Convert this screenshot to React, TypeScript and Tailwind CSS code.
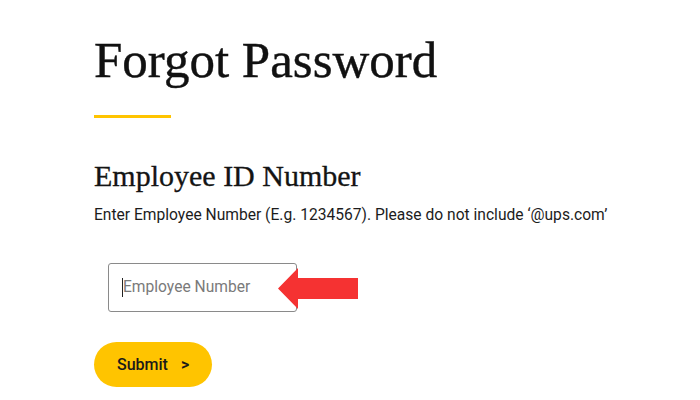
import React from "react";

export default function App() {
  return (
    <div className="w-[700px] h-[400px] bg-white overflow-hidden pl-[94px] pt-[35px]">
      <h1 className="font-['Liberation_Serif',serif] text-[51px] leading-none text-[#111111] [-webkit-text-stroke:0.4px_#111111]">
        Forgot Password
      </h1>
      <div className="mt-[29px] w-[77px] h-[3px] bg-[#ffc400]" />

      <h2 className="mt-[43px] font-['Liberation_Serif',serif] text-[30px] leading-none text-[#141414] [-webkit-text-stroke:0.3px_#141414]">
        Employee ID Number
      </h2>
      <p className="mt-[14px] font-['Roboto',sans-serif] text-[15.6px] leading-5 text-[#1c1c1c]">
        Enter Employee Number (E.g. 1234567). Please do not include ‘@ups.com’
      </p>

      {/* Input with annotation arrow */}
      <div className="relative mt-[38px] ml-[14px] w-[189px]">
        <div className="flex items-center h-[49px] border border-[#8a8a8a] rounded-[3px] pl-[13px]">
          <span className="w-px h-[19px] bg-[#222]" />
          <input
            placeholder="Employee Number"
            className="w-full outline-none bg-transparent font-['Roboto',sans-serif] text-[15.6px] placeholder:text-[#7a7a7a]"
          />
        </div>
        <svg
          className="absolute left-[170px] top-[5px]"
          width="80"
          height="41"
          viewBox="0 0 80 41"
        >
          <polygon points="0,20.5 20,0 20,10 80,10 80,31 20,31 20,41" fill="#f53232" />
        </svg>
      </div>

      <button className="mt-[30px] flex items-center gap-[13px] h-[45px] px-[23px] rounded-full bg-[#ffc400] font-['Roboto',sans-serif] font-medium text-[16px] text-[#1a1a1a]">
        <span>Submit</span>
        <span className="font-bold">&gt;</span>
      </button>
    </div>
  );
}
